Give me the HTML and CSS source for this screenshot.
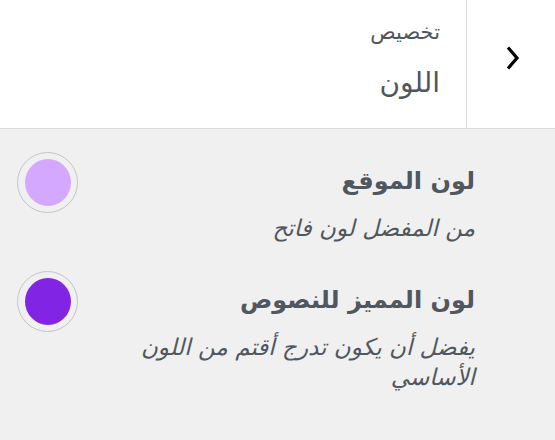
FILE: index.html
```html
<!DOCTYPE html>
<html lang="ar" dir="rtl">
<head>
<meta charset="utf-8">
<link rel="stylesheet" href="styles.css">
</head>
<body>
<div class="panel">
  <header class="head">
    <button class="back" aria-label="رجوع">
      <svg width="16" height="26" viewBox="0 0 16 26"><path d="M3 2.5 L12 13 L3 23.5" fill="none" stroke="#000" stroke-width="3.2"/></svg>
    </button>
    <div class="titles">
      <span class="crumb">تخصيص</span>
      <h2 class="title">اللون</h2>
    </div>
  </header>
  <ul class="controls">
    <li class="control">
      <div class="text">
        <span class="label">لون الموقع</span>
        <span class="desc">من المفضل لون فاتح</span>
      </div>
      <span class="swatch"><span class="fill light"></span></span>
    </li>
    <li class="control">
      <div class="text">
        <span class="label">لون المميز للنصوص</span>
        <span class="desc">يفضل أن يكون تدرج أقتم من اللون الأساسي</span>
      </div>
      <span class="swatch"><span class="fill dark"></span></span>
    </li>
  </ul>
</div>
</body>
</html>
```
FILE: styles.css
```css
html, body { margin: 0; padding: 0; }
body {
  width: 555px;
  height: 440px;
  background: #f0f0f1;
  font-family: "DejaVu Sans", sans-serif;
  color: #50575e;
  overflow: hidden;
}
.head {
  display: flex;
  height: 128px;
  background: #fff;
  border-bottom: 1px solid #dcdcde;
}
.back {
  width: 89px;
  border: 0;
  border-left: 1px solid #dcdcde;
  background: #fff;
  display: flex;
  align-items: center;
  justify-content: center;
  padding: 0 0 12px 4px;
}
.titles {
  display: flex;
  flex-direction: column;
  padding: 16px 26px 0 0;
}
.crumb {
  font-size: 21px;
  color: #50575e;
  line-height: 32px;
}
.title {
  margin: 15px 0 0;
  font-weight: normal;
  font-size: 28px;
  line-height: 40px;
  color: #50575e;
}
.controls {
  list-style: none;
  margin: 0;
  padding: 23px 80px 0 17px;
}
.control {
  display: flex;
  justify-content: space-between;
  align-items: flex-start;
  height: 119px;
}
.text {
  display: flex;
  flex-direction: column;
  max-width: 345px;
}
.label {
  font-weight: bold;
  font-size: 24px;
  line-height: 34px;
  margin-top: 12px;
}
.desc {
  font-style: italic;
  font-size: 23px;
  line-height: 30px;
  margin-top: 15px;
}
.swatch {
  width: 59px;
  height: 59px;
  border: 1px solid #c3c4c7;
  border-radius: 50%;
  display: flex;
  align-items: center;
  justify-content: center;
}
.fill {
  width: 46px;
  height: 47px;
  border-radius: 50%;
}
.light { background: #d5a8ff; }
.dark { background: #8224e3; }
```
